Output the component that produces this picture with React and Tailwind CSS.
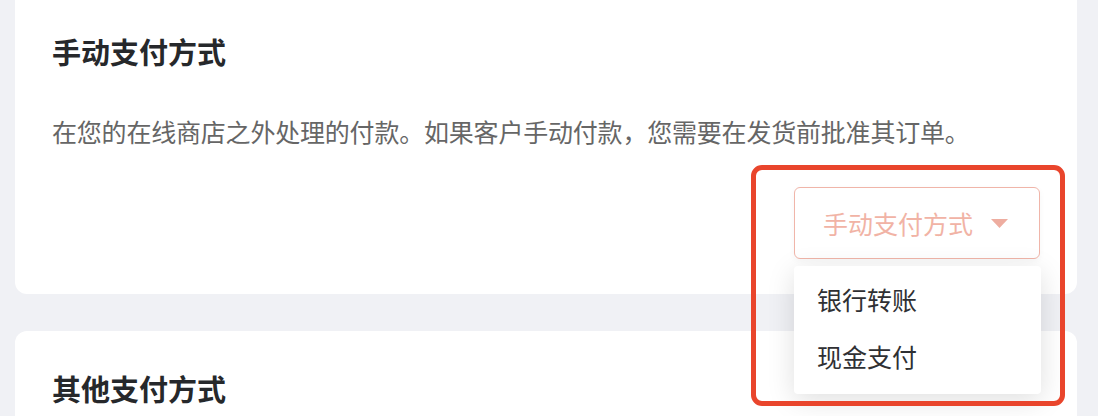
export default function App() {
  const font = { fontFamily: '"Noto Sans CJK SC", "Noto Sans", sans-serif' };
  return (
    <div
      className="w-[1098px] h-[416px] overflow-hidden bg-[#f0f1f5] pl-[15px] pr-[21px]"
      style={font}
    >
      <div className="bg-white rounded-b-[12px] px-[37px] pt-[31px] pb-[35px]">
        <h2 className="text-[29px] leading-[40px] font-bold text-[#26282b]">手动支付方式</h2>
        <p className="mt-[42px] text-[25px] leading-[36px] text-[#666666] tracking-[-0.2px]">
          在您的在线商店之外处理的付款。如果客户手动付款，您需要在发货前批准其订单。
        </p>
        <div className="mt-[38px] flex justify-end">
          <div className="relative z-10">
            <button className="flex items-center h-[72px] w-[246px] pl-[28px] pr-[31px] border border-[#f0b5a9] rounded-[6px] bg-white text-[25px] text-[#f1b3a5] shadow-[0_2px_6px_rgba(0,0,0,0.04)]">
              <span className="leading-none">手动支付方式</span>
              <svg className="ml-auto" width="17" height="9" viewBox="0 0 17 9">
                <path d="M0 0 H17 L8.5 9 Z" fill="#eeada0" />
              </svg>
            </button>
            <div className="absolute left-0 top-full mt-[7px] w-[247px] bg-white rounded-[4px] pt-[5px] pb-[9px] shadow-[0_6px_28px_rgba(0,0,0,0.13)]">
              <div className="h-[57px] flex items-center pl-[23px] text-[25px] text-[#2f3033]">银行转账</div>
              <div className="h-[57px] flex items-center pl-[23px] text-[25px] text-[#2f3033]">现金支付</div>
            </div>
            <div className="absolute left-[-43px] top-[-22px] right-[-25px] bottom-[-147px] border-[5px] border-[#e9452c] rounded-[11px] pointer-events-none" />
          </div>
        </div>
      </div>
      <div className="mt-[37px] bg-white rounded-t-[12px] px-[37px] pt-[37px] h-[200px]">
        <h2 className="text-[29px] leading-[40px] font-bold text-[#26282b]">其他支付方式</h2>
      </div>
    </div>
  );
}
